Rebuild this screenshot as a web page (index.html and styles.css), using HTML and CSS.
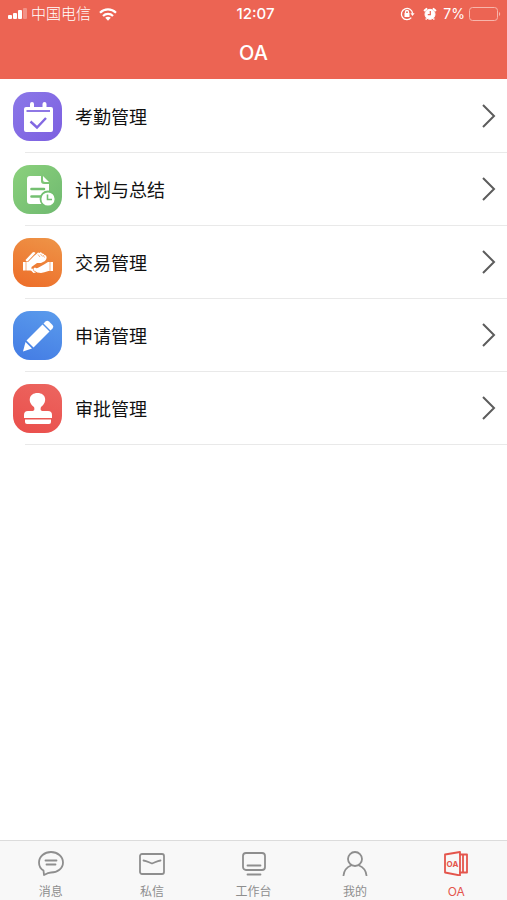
FILE: index.html
```html
<!DOCTYPE html>
<html lang="zh-CN">
<head>
    <meta charset="UTF-8">
    <meta name="viewport" content="width=device-width, initial-scale=1.0">
    <title>OA</title>
    <link rel="stylesheet" href="styles.css">
</head>
<body>
    <header class="header">
        <div class="status-bar">
            <div class="status-left">
                <svg class="signal" width="19" height="12" viewBox="0 0 19 12" fill="#fff">
                    <rect x="0" y="7" width="4" height="4" rx="1"/>
                    <rect x="5" y="5" width="4" height="6" rx="1"/>
                    <rect x="10" y="2" width="4" height="9" rx="1"/>
                    <rect x="15" y="0" width="4" height="11" rx="1" opacity="0.3"/>
                </svg>
                <span class="carrier">中国电信</span>
                <svg class="wifi" width="18" height="13" viewBox="0 0 18 13" fill="none" stroke="#fff" stroke-width="2.2">
                    <path d="M1 4.8C5.5 0.3 12.5 0.3 17 4.8"/>
                    <path d="M4 8C6.8 5.2 11.2 5.2 14 8"/>
                    <path d="M6.2 9.8C7.8 8.3 10.2 8.3 11.8 9.8L9 12.7Z" fill="#fff" stroke="none"/>
                </svg>
            </div>
            <span class="time">12:07</span>
            <div class="status-right">
                <svg width="15" height="14" viewBox="0 0 15 14" fill="none" stroke="#fff" stroke-width="1.3">
                    <path d="M11.3 10.7A5.6 5.6 0 1 1 12.6 6.5"/>
                    <path d="M10.4 6.3H14.6L12.5 9Z" fill="#fff" stroke="none"/>
                    <rect x="4.5" y="6" width="5" height="4" fill="#fff" stroke="none"/>
                    <path d="M5.5 6.5V5a1.5 1.5 0 0 1 3 0V6.5"/>
                </svg>
                <svg class="alarm" width="14" height="14" viewBox="0 0 14 14" fill="none" stroke="#fff">
                    <circle cx="7" cy="7.3" r="5" fill="#fff"/>
                    <path d="M1.6 3.4L3.4 1.9M12.4 3.4L10.6 1.9" stroke-width="2" stroke-linecap="round"/>
                    <path d="M3.6 11.4L2.8 12.6M10.4 11.4L11.2 12.6" stroke-width="1.5"/>
                    <path d="M7.3 4V7.6H4.8" stroke="#ec6453" stroke-width="1.2"/>
                </svg>
                <span class="percent">7%</span>
                <svg width="32" height="14" viewBox="0 0 32 14" fill="none" stroke="#f7b5ab">
                    <rect x="0.5" y="0.5" width="28" height="13" rx="3"/>
                    <path d="M30 5C31.6 5.5 31.6 8.5 30 9Z" fill="#f7b5ab" stroke="none"/>
                </svg>
            </div>
        </div>
        <h1 class="title">OA</h1>
    </header>

    <main class="content">
        <ul class="menu">
            <li class="menu-item">
                <a href="#" class="menu-link">
                    <span class="menu-icon purple">
                        <svg width="49" height="49" viewBox="0 0 49 49">
                            <path d="M13 15H17V12a2 2 0 0 1 4 0V15H29.500V12a2 2 0 0 1 4 0V15H38a2 2 0 0 1 2 2V38a2 2 0 0 1-2 2H13a2 2 0 0 1-2-2V17a2 2 0 0 1 2-2Z" fill="#fff"/>
                            <path d="M13.500 19H37" fill="none" stroke="#8268e2" stroke-width="1.800"/>
                            <path d="M17.500 29.500L24 35.500L33 26" fill="none" stroke="#8268e2" stroke-width="2.400"/>
                        </svg>
                    </span>
                    <span class="menu-text">考勤管理</span>
                    <svg class="arrow" viewBox="0 0 14 24"><path d="M1 1L12 12L1 23"/></svg>
                </a>
            </li>
            <li class="menu-item">
                <a href="#" class="menu-link">
                    <span class="menu-icon green">
                        <svg width="49" height="49" viewBox="0 0 49 49">
                            <path d="M17 11H28V16a3 3 0 0 0 3 3H36V39H17a3 3 0 0 1-3-3V14a3 3 0 0 1 3-3Z" fill="#fff"/>
                            <path d="M30 11L36 17H32a2 2 0 0 1-2-2Z" fill="#fff"/>
                            <path d="M18.500 24H31M18.500 31.500H27" stroke="#74c071" stroke-width="2.600" stroke-linecap="round"/>
                            <circle cx="35" cy="34" r="7.500" fill="#fff" stroke="#74c071" stroke-width="1.800"/>
                            <path d="M34.500 29.500V34.500H39" fill="none" stroke="#74c071" stroke-width="1.600"/>
                        </svg>
                    </span>
                    <span class="menu-text">计划与总结</span>
                    <svg class="arrow" viewBox="0 0 14 24"><path d="M1 1L12 12L1 23"/></svg>
                </a>
            </li>
            <li class="menu-item">
                <a href="#" class="menu-link">
                    <span class="menu-icon orange">
                        <svg width="49" height="49" viewBox="0 0 49 49" fill="#fff">
                            <path d="M12.500 22L19.500 14.500Q21 13.500 22.500 15L14.500 23.500Q13 23.500 12.500 22Z"/>
                            <path d="M10 24H15L21 18L24 15.500Q25 14 26.500 15Q28 13.500 29 15.500Q31 15 31.500 17Q33.500 17 33.500 19Q34 21 32 23L28 25H24L18.500 29V32.500H10Z"/>
                            <path d="M40 24V33H35.500Q31 34.500 28 35Q24 35 21 32.500Q19.500 30.500 22 29.500Q24 31 26.500 29L31 26.500L35 24Z"/>
                            <path d="M17 31.500L19.500 30.500Q20 33 23 34.500L20.500 35Z"/>
                            <path d="M25 16.500L27 19M27.500 16L29.500 18.500M30 17L31.500 19.500M13 24V33M37 24V33" fill="none" stroke="#ee7d30" stroke-width="0.600"/>
                        </svg>
                    </span>
                    <span class="menu-text">交易管理</span>
                    <svg class="arrow" viewBox="0 0 14 24"><path d="M1 1L12 12L1 23"/></svg>
                </a>
            </li>
            <li class="menu-item">
                <a href="#" class="menu-link">
                    <span class="menu-icon blue">
                        <svg width="49" height="49" viewBox="0 0 49 49" fill="#fff">
                            <path d="M10 40.500L12.500 31L19 37.500Z"/>
                            <path d="M13.500 29.500L29.500 13.500L36.500 20.500L20.500 36.500Z"/>
                            <path d="M30.500 12.500L32.500 10.500a2.500 2.500 0 0 1 3.500 0L39.500 14a2.500 2.500 0 0 1 0 3.500L37.500 19.500Z"/>
                        </svg>
                    </span>
                    <span class="menu-text">申请管理</span>
                    <svg class="arrow" viewBox="0 0 14 24"><path d="M1 1L12 12L1 23"/></svg>
                </a>
            </li>
            <li class="menu-item">
                <a href="#" class="menu-link">
                    <span class="menu-icon red">
                        <svg width="49" height="49" viewBox="0 0 49 49" fill="#fff">
                            <path d="M21 23C14 18 16 9 24.500 9S35 18 28 23C27 26 28 27 30 27H35a4 4 0 0 1 4 4V34H11V31a4 4 0 0 1 4-4H19C21 27 22 26 21 23Z"/>
                            <path d="M12 35.500H38V38a2 2 0 0 1-2 2H14a2 2 0 0 1-2-2Z"/>
                        </svg>
                    </span>
                    <span class="menu-text">审批管理</span>
                    <svg class="arrow" viewBox="0 0 14 24"><path d="M1 1L12 12L1 23"/></svg>
                </a>
            </li>
        </ul>
    </main>

    <nav class="tab-bar">
        <a href="#" class="tab">
            <svg class="tab-icon" viewBox="0 0 26 26">
                <path d="M6 25L5.500 20.500C2 18.500 1 15.500 1 12.500C1 6.500 6.500 2 13 2S25 6.500 25 12.500S19.500 22.500 13 22.500C11 22.500 9.500 23 6 25Z"/>
                <path d="M7.500 10.500H18.500M8.500 14.500H17.500"/>
            </svg>
            <span>消息</span>
        </a>
        <a href="#" class="tab">
            <svg class="tab-icon" viewBox="0 0 26 26">
                <rect x="1" y="4" width="24" height="20" rx="2"/>
                <path d="M4.500 10.500C8 11 10 12.500 13 13.500C16 12.500 18 11 21.500 10.500"/>
            </svg>
            <span>私信</span>
        </a>
        <a href="#" class="tab">
            <svg class="tab-icon" viewBox="0 0 26 26">
                <rect x="2" y="3" width="22" height="17" rx="3"/>
                <path d="M6.500 15.500H19.500M6.500 24.500H19.500"/>
            </svg>
            <span>工作台</span>
        </a>
        <a href="#" class="tab">
            <svg class="tab-icon" viewBox="0 0 26 26">
                <circle cx="13" cy="9" r="7"/>
                <path d="M1.500 25.500C2 20.500 4 17.500 9 15.500M24.500 25.500C24 20.500 22 17.500 17 15.500"/>
            </svg>
            <span>我的</span>
        </a>
        <a href="#" class="tab active">
            <svg class="tab-icon" viewBox="0 0 26 26">
                <path d="M2 4.500L17 2V25.500L2 22.500Z"/>
                <path d="M17 4.500H24V22.500H17M20 4.500V22.500"/>
                <text class="tab-icon-text" x="9.500" y="17" text-anchor="middle">OA</text>
            </svg>
            <span>OA</span>
        </a>
    </nav>
</body>
</html>
```
FILE: styles.css
```css
* {
    margin: 0;
    padding: 0;
    box-sizing: border-box;
}

body {
    display: flex;
    flex-direction: column;
    min-height: 100vh;
    background: #fff;
    color: #111;
    font-family: Inter, "Noto Sans CJK SC", sans-serif;
}

a {
    color: inherit;
    text-decoration: none;
}

svg {
    display: block;
    flex-shrink: 0;
}

/* Header */
.header {
    height: 79px;
    background: #ec6453;
    color: #fff;
}

.status-bar {
    display: grid;
    grid-template-columns: 1fr auto 1fr;
    align-items: center;
    height: 28px;
    padding: 0 6px 0 8px;
    font-size: 14px;
    line-height: 20px;
}

.status-left,
.status-right {
    display: flex;
    align-items: center;
    gap: 4px;
}

.status-right {
    justify-content: flex-end;
}

.carrier {
    font-size: 15px;
    font-weight: 300;
}

.wifi {
    margin-left: 4px;
}

.time {
    padding-left: 2px;
    font-size: 15px;
    font-weight: 500;
}

.alarm {
    margin: 0 2px 0 4px;
}

.title {
    font-size: 20px;
    font-weight: 500;
    line-height: 50px;
    text-align: center;
}

/* Menu list */
.content {
    flex: 1;
}

.menu {
    list-style: none;
    padding-top: 1px;
}

.menu-item {
    margin-left: 25px;
    border-bottom: 1px solid #e9e9e9;
}

.menu-link {
    display: flex;
    align-items: center;
    gap: 13px;
    height: 72px;
    margin-left: -12px;
    padding-right: 11px;
}

.menu-icon {
    border-radius: 17px;
}

.purple {
    background: linear-gradient(135deg, #8b78e8, #7c5fe0);
}

.green {
    background: linear-gradient(135deg, #8bd17c, #6fb970);
}

.orange {
    background: linear-gradient(20deg, #ed6c28, #ee9548);
}

.blue {
    background: linear-gradient(20deg, #437be4, #5b9cec);
}

.red {
    background: linear-gradient(20deg, #ea4e4b, #ec6660);
}

.menu-text {
    flex: 1;
    padding-top: 3px;
    font-size: 18px;
    line-height: 28px;
}

.arrow {
    width: 14px;
    height: 24px;
    fill: none;
    stroke: #5c5c5c;
    stroke-width: 2;
}

/* Bottom tabs */
.tab-bar {
    display: flex;
    height: 60px;
    background: #f8f8f8;
    border-top: 1px solid #dcdcdc;
}

.tab {
    display: flex;
    flex: 1;
    flex-direction: column;
    align-items: center;
    gap: 7px;
    padding-top: 9px;
    color: #8e8e8e;
    font-size: 12px;
    line-height: 18px;
}

.tab-icon {
    width: 26px;
    height: 26px;
    fill: none;
    stroke: currentColor;
    stroke-width: 1.8;
    stroke-linecap: round;
    stroke-linejoin: round;
}

.tab-icon-text {
    fill: currentColor;
    stroke: none;
    font-size: 8px;
    font-weight: 700;
}

.active {
    color: #e4554c;
}
```
